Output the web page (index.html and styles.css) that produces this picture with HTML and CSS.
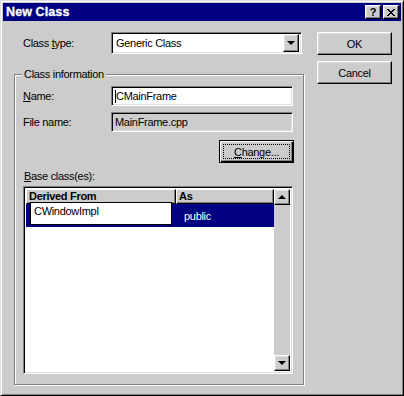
FILE: index.html
```html
<!DOCTYPE html>
<html>
<head>
<meta charset="utf-8">
<link rel="stylesheet" href="styles.css">
</head>
<body>
<div class="window">
  <div class="titlebar">
    <span class="title">New Class</span>
    <div class="caption-btns">
      <span class="cbtn">?</span>
      <span class="cbtn cbtn-x"><svg width="8" height="7" viewBox="0 0 8 7"><path d="M0 0h2v1h1v1h2v-1h1v-1h2v1h-1v1h-1v1h-1v1h1v1h1v1h1v1h-2v-1h-1v-1h-2v1h-1v1h-2v-1h1v-1h1v-1h1v-1h-1v-1h-1v-1h-1z" fill="#000"/></svg></span>
    </div>
  </div>
  <div class="body">
    <div class="left">
      <div class="row-type">
        <span class="lbl">Class <u>t</u>ype:</span>
        <div class="combo field">
          <span class="combo-text">Generic Class</span>
          <span class="btn drop"><i class="tri-down"></i></span>
        </div>
      </div>
      <div class="group">
        <span class="legend">Class information</span>
        <div class="frow">
          <span class="lbl"><u>N</u>ame:</span>
          <div class="edit field"><span class="caret"></span>CMainFrame</div>
        </div>
        <div class="frow frow-file">
          <span class="lbl">File name:</span>
          <div class="edit field disabled">MainFrame.cpp</div>
        </div>
        <div class="change-row">
          <span class="btn btn-default"><span class="focus"><u>C</u>hange...</span></span>
        </div>
        <div class="base-lbl"><u>B</u>ase class(es):</div>
        <div class="list field">
          <div class="list-main">
            <div class="list-head">
              <span class="hcell hcell-derived">Derived From</span>
              <span class="hcell hcell-as">As</span>
            </div>
            <div class="list-row selected">
              <span class="cell cell-derived"><span class="inplace">CWindowImpl</span></span>
              <span class="cell cell-as">public</span>
            </div>
          </div>
          <div class="vscroll">
            <span class="btn sbtn"><i class="tri-up"></i></span>
            <span class="track"></span>
            <span class="btn sbtn"><i class="tri-down"></i></span>
          </div>
        </div>
      </div>
    </div>
    <div class="right">
      <span class="btn pbtn">OK</span>
      <span class="btn pbtn">Cancel</span>
    </div>
  </div>
</div>
</body>
</html>
```

FILE: styles.css
```css
* { box-sizing: border-box; }
html, body { margin: 0; padding: 0; background: #cccccc; }
body {
  font-family: "Liberation Sans", Arial, sans-serif;
  font-size: 11px;
  letter-spacing: -0.3px;
  color: #000;
}
u { text-decoration: underline; text-underline-offset: 1px; }

.window {
  width: 404px;
  height: 396px;
  background: #cccccc;
  border: 1px solid;
  border-color: #dfdfdf #000 #000 #dfdfdf;
  box-shadow: inset 1px 1px #fff, inset -1px -1px #808080;
  padding: 2px;
  display: flex;
  flex-direction: column;
}

.titlebar {
  height: 18px;
  background: #000080;
  display: flex;
  align-items: center;
  justify-content: space-between;
  padding: 0 2px 0 3px;
  flex: none;
}
.title {
  color: #fff;
  font-weight: bold;
  font-size: 12.5px;
  letter-spacing: 0.1px;
  -webkit-text-stroke: 0.3px #fff;
}
.caption-btns { display: flex; gap: 2px; }
.cbtn {
  width: 16px;
  height: 14px;
  background: #cccccc;
  border: 1px solid;
  border-color: #fff #000 #000 #fff;
  box-shadow: inset -1px -1px #808080, inset 1px 1px #dfdfdf;
  display: flex;
  align-items: center;
  justify-content: center;
  font-weight: bold;
  font-size: 11px;
  letter-spacing: 0;
  line-height: 1;
}

.field {
  border: 1px solid;
  border-color: #808080 #fff #fff #808080;
  box-shadow: inset 1px 1px #000, inset -1px -1px #dfdfdf;
  background: #fff;
}
.btn {
  background: #cccccc;
  border: 1px solid;
  border-color: #fff #000 #000 #fff;
  box-shadow: inset -1px -1px #808080, inset 1px 1px #dfdfdf;
  display: flex;
  align-items: center;
  justify-content: center;
}

.body {
  flex: 1;
  display: flex;
  padding: 11px 0 0 11px;
}
.left { width: 290px; display: flex; flex-direction: column; }
.right {
  margin-left: 13px;
  display: flex;
  flex-direction: column;
  gap: 6px;
}
.pbtn { width: 75px; height: 23px; }

.row-type { display: flex; align-items: center; height: 22px; }
.lbl { width: 97px; padding-left: 9px; flex: none; }
.combo {
  width: 191px;
  height: 22px;
  display: flex;
  align-items: center;
  padding: 2px;
}
.combo-text { flex: 1; padding-left: 2px; }
.drop { width: 16px; height: 18px; }
.tri-down, .tri-up {
  display: block;
  width: 0; height: 0;
  border-left: 4px solid transparent;
  border-right: 4px solid transparent;
}
.tri-down { border-top: 4px solid #000; }
.tri-up { border-bottom: 4px solid #000; }

.group {
  position: relative;
  margin-top: 20px;
  width: 290px;
  height: 311px;
  border: 1px solid #808080;
  box-shadow: inset 1px 1px #fff, 1px 1px #fff;
  padding: 11px 0 0 8px;
  display: flex;
  flex-direction: column;
}
.legend {
  position: absolute;
  left: 7px;
  top: -8px;
  background: #cccccc;
  padding: 0 2px;
  line-height: 14px;
}
.frow { display: flex; align-items: center; height: 20px; }
.frow-file { margin-top: 6px; }
.frow .lbl { width: 88px; padding-left: 0; }
.edit {
  width: 182px;
  height: 20px;
  display: flex;
  align-items: center;
  padding-left: 3px;
  position: relative;
}
.edit.disabled {
  background: #cccccc;
  box-shadow: inset 1px 1px #000, inset -1px -1px #dfdfdf;
}
.caret {
  display: inline-block;
  width: 1px;
  height: 13px;
  background: #000;
}
.change-row { display: flex; justify-content: flex-end; margin-top: 8px; padding-right: 9px; }
.btn-default {
  width: 75px;
  height: 23px;
  border: 1px solid #000;
  box-shadow: inset 1px 1px #fff, inset -1px -1px #000, inset -2px -2px #808080;
  padding: 3px;
}
.focus {
  width: 100%;
  height: 100%;
  border: 1px dotted #000;
  display: flex;
  align-items: center;
  justify-content: center;
}
.base-lbl { margin-top: 6px; padding-left: 1px; line-height: 14px; }
.list {
  margin-top: 3px;
  width: 270px;
  height: 188px;
  padding: 2px;
  display: flex;
}
.list-main { flex: 1; display: flex; flex-direction: column; }
.list-head { display: flex; height: 15px; }
.hcell {
  background: #cccccc;
  border: 1px solid;
  border-color: #fff #000 #000 #fff;
  box-shadow: inset -1px -1px #808080;
  font-weight: bold;
  padding-left: 2px;
  line-height: 12px;
}
.hcell-derived { width: 150px; }
.hcell-as { flex: 1; }
.list-row { display: flex; height: 23px; }
.selected { background: #000080; color: #fff; }
.cell { position: relative; display: flex; align-items: center; }
.cell-derived { width: 150px; }
.cell-as { padding-left: 8px; }
.inplace {
  position: absolute;
  left: 4px;
  top: -2px;
  width: 142px;
  height: 23px;
  background: #fff;
  color: #000;
  border: 1px solid #000;
  padding: 2px 0 0 3px;
}
.vscroll { width: 16px; display: flex; flex-direction: column; }
.sbtn { height: 16px; flex: none; }
.track { flex: 1; background: #cccccc; }
```
